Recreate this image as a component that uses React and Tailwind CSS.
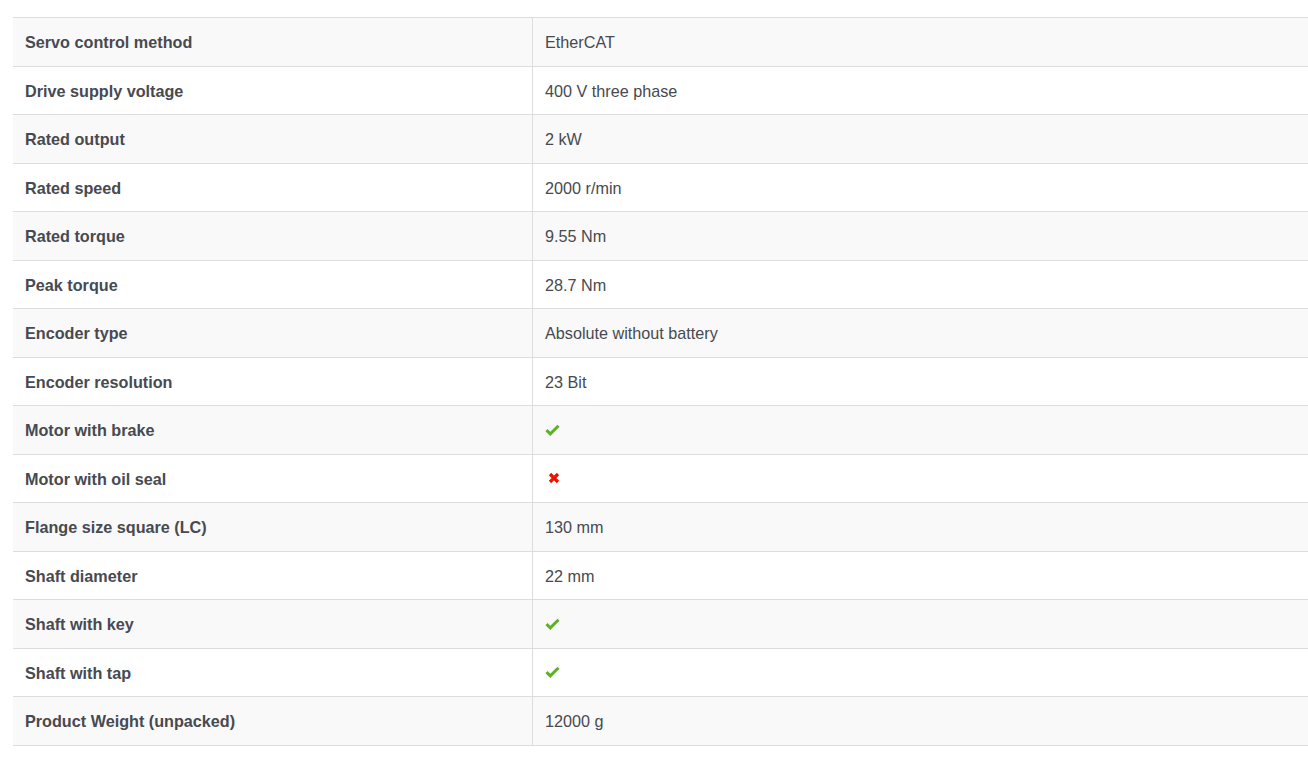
const rows = [
  ["Servo control method", "EtherCAT"],
  ["Drive supply voltage", "400 V three phase"],
  ["Rated output", "2 kW"],
  ["Rated speed", "2000 r/min"],
  ["Rated torque", "9.55 Nm"],
  ["Peak torque", "28.7 Nm"],
  ["Encoder type", "Absolute without battery"],
  ["Encoder resolution", "23 Bit"],
  ["Motor with brake", "yes"],
  ["Motor with oil seal", "no"],
  ["Flange size square (LC)", "130 mm"],
  ["Shaft diameter", "22 mm"],
  ["Shaft with key", "yes"],
  ["Shaft with tap", "yes"],
  ["Product Weight (unpacked)", "12000 g"],
];

function Check() {
  return (
    <svg width="15" height="12" viewBox="0 0 15 12" className="block">
      <path d="M1.5 6.2 L5.3 9.8 L13.5 1.8" fill="none" stroke="#5cb322" strokeWidth="3" strokeLinejoin="miter" />
    </svg>
  );
}

function Cross() {
  return (
    <svg width="12" height="12" viewBox="0 0 12 12" className="block">
      <path d="M2 2 L10 10 M10 2 L2 10" fill="none" stroke="#ee1100" strokeWidth="3.2" />
    </svg>
  );
}

export default function App() {
  return (
    <div className="min-h-screen bg-white pt-[17px] pl-[13px]" style={{ fontFamily: '"Liberation Sans", Arial, sans-serif' }}>
      <div className="w-[1295px] border-t border-[#dddddd] text-[16.2px] text-[#474a50]">
        {rows.map(([k, v], i) => (
          <div
            key={k}
            className={"flex h-[48.53px] border-b border-[#dddddd] " + (i % 2 === 0 ? "bg-[#f9f9f9]" : "bg-white")}
          >
            <div className="w-[519px] flex items-center px-3 pt-[1px] font-bold">{k}</div>
            <div className="flex-1 flex items-center px-3 border-l border-[#dddddd]">
              {v === "yes" ? <Check /> : v === "no" ? <span className="pl-[3px]"><Cross /></span> : <span className="pt-[1px]">{v}</span>}
            </div>
          </div>
        ))}
      </div>
    </div>
  );
}
